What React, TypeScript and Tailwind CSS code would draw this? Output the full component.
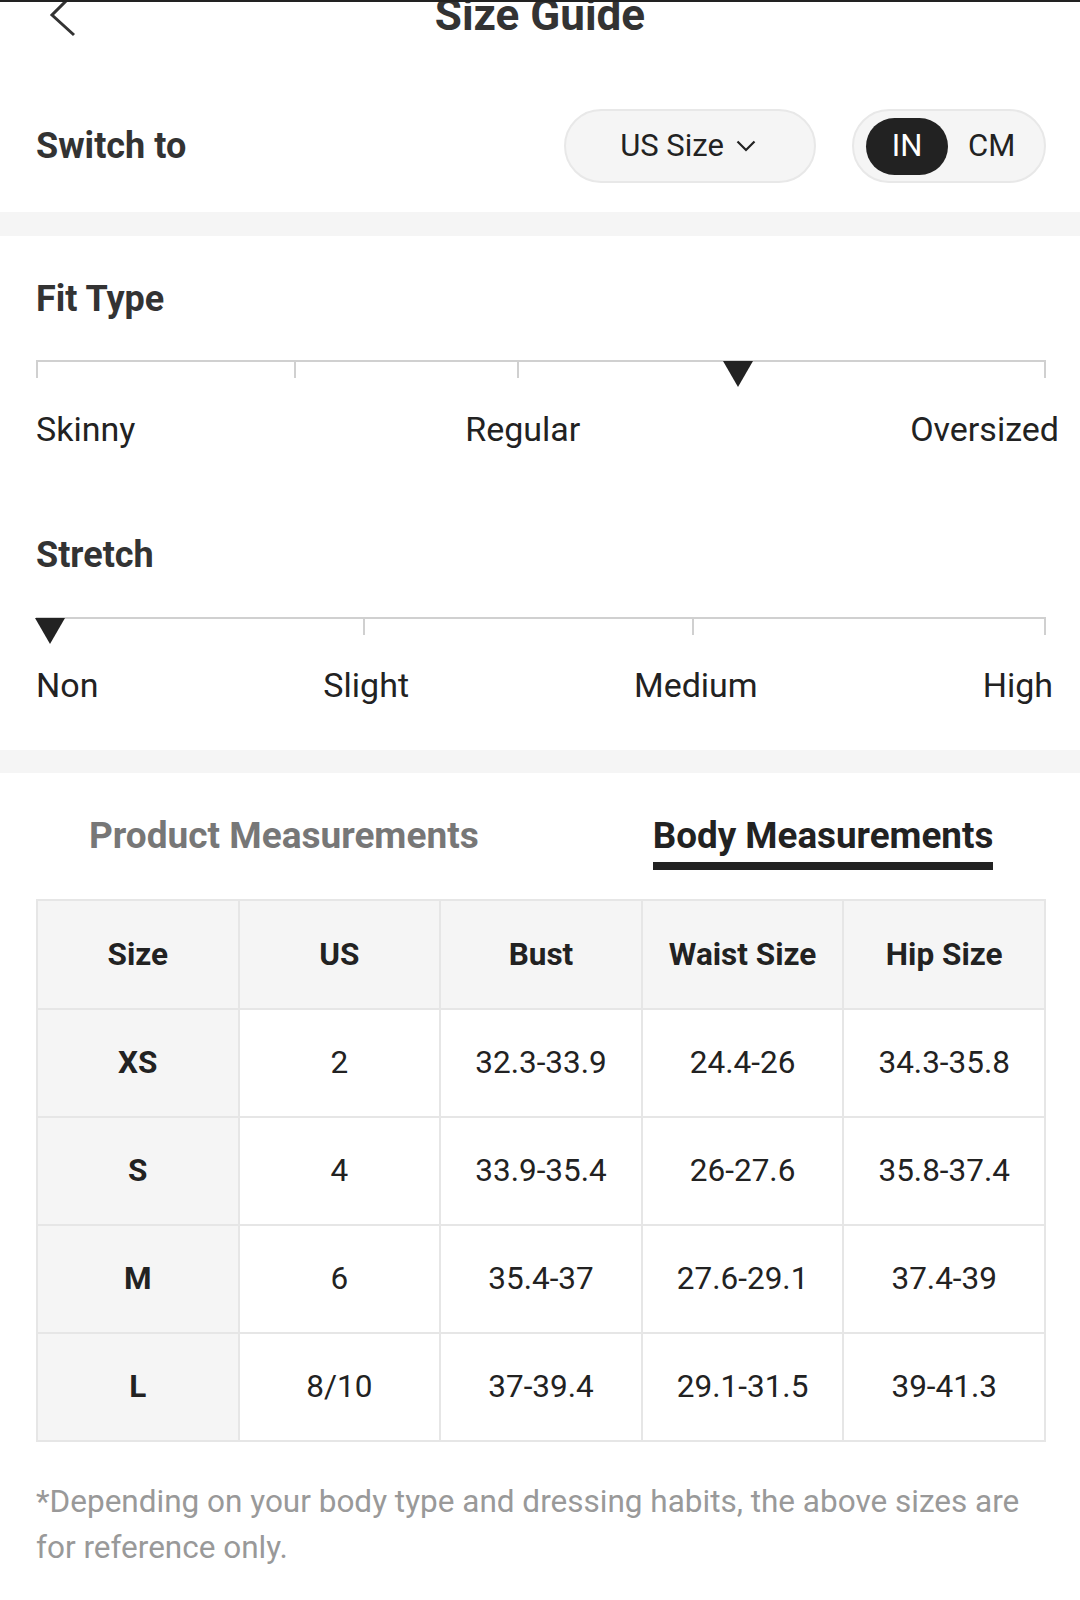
const fitTicks = [0, 258, 481, 1008];
const stretchTicks = [327, 656, 1008];

const rows = [
  ["XS", "2", "32.3-33.9", "24.4-26", "34.3-35.8"],
  ["S", "4", "33.9-35.4", "26-27.6", "35.8-37.4"],
  ["M", "6", "35.4-37", "27.6-29.1", "37.4-39"],
  ["L", "8/10", "37-39.4", "29.1-31.5", "39-41.3"],
];

function Scale({ ticks, marker }: { ticks: number[]; marker: number }) {
  return (
    <div className="relative h-[18px]">
      <div className="h-[2px] bg-[#d0d0d0]" />
      {ticks.map((t) => (
        <div
          key={t}
          className="absolute top-0 h-[18px] w-[2px] bg-[#d0d0d0]"
          style={{ left: t }}
        />
      ))}
      <svg
        className="absolute top-[1px]"
        style={{ left: marker - 15 }}
        width="30"
        height="26"
        viewBox="0 0 30 26"
      >
        <path d="M0 0H30L15 26Z" fill="#222" />
      </svg>
    </div>
  );
}

export default function App() {
  return (
    <div
      className="min-h-[1600px] w-[1080px] overflow-hidden border-t-2 border-[#222] bg-white text-[#222]"
      style={{ fontFamily: "Roboto, 'Noto Sans', sans-serif" }}
    >
      <div className="relative -mt-[9px] h-[44px] text-center">
        <svg
          className="absolute left-[44px] top-[-3px]"
          width="40"
          height="50"
          viewBox="0 0 40 50"
          fill="none"
        >
          <path d="M28 5L8 25L30 45" stroke="#333" strokeWidth="3" />
        </svg>
        <h1 className="text-[44px] font-bold leading-[44px] text-[#333]">Size Guide</h1>
      </div>

      <div className="mt-[72px] flex items-center pl-[36px] pr-[34px]">
        <span className="text-[36px] font-bold leading-[42px] text-[#333]">Switch to</span>
        <button className="ml-auto flex h-[74px] w-[252px] items-center justify-center gap-[12px] rounded-full border-2 border-[#e8e8e8] bg-[#f5f5f5] pr-[4px] text-[31px]">
          US Size
          <svg width="20" height="12" viewBox="0 0 20 12" fill="none">
            <path d="M1.5 1.5L10 10L18.5 1.5" stroke="#222" strokeWidth="2.2" />
          </svg>
        </button>
        <div className="ml-[36px] flex h-[74px] w-[194px] items-center rounded-full border-2 border-[#e8e8e8] bg-[#f5f5f5] pl-[12px] text-[31px]">
          <span className="flex h-[57px] w-[82px] items-center justify-center rounded-full bg-[#222] text-white">
            IN
          </span>
          <span className="ml-[20px]">CM</span>
        </div>
      </div>

      <div className="mt-[29px] h-[24px] bg-[#f5f5f5]" />

      <section className="pl-[36px] pr-[34px] pt-[42px]">
        <h2 className="text-[36px] font-bold leading-[42px] text-[#333]">Fit Type</h2>
        <div className="mt-[40px]">
          <Scale ticks={fitTicks} marker={702} />
        </div>
        <div className="-mr-[13px] mt-[31px] flex justify-between text-[34px] leading-[40px]">
          <span>Skinny</span>
          <span>Regular</span>
          <span>Oversized</span>
        </div>

        <h2 className="mt-[85px] text-[36px] font-bold leading-[42px] text-[#333]">Stretch</h2>
        <div className="mt-[41px]">
          <Scale ticks={stretchTicks} marker={14} />
        </div>
        <div className="-mr-[7px] mt-[30px] flex justify-between text-[34px] leading-[40px]">
          <span>Non</span>
          <span>Slight</span>
          <span>Medium</span>
          <span>High</span>
        </div>
      </section>

      <div className="mt-[45px] h-[23px] bg-[#f5f5f5]" />

      <section className="pl-[36px] pr-[34px] pt-[42px]">
        <div className="flex items-start">
          <span className="ml-[53px] text-[37px] font-bold leading-[41px] text-[#777]">
            Product Measurements
          </span>
          <div className="ml-[174px] flex flex-col">
            <span className="text-[36.8px] font-bold leading-[41px] text-[#222]">Body Measurements</span>
            <div className="mt-[6px] h-[8px] bg-[#222]" />
          </div>
        </div>

        <div className="mt-[29px] grid grid-cols-5 gap-[2px] bg-[#e6e6e6] p-[2px] text-[31.5px]">
          {["Size", "US", "Bust", "Waist Size", "Hip Size"].map((h) => (
            <div key={h} className="flex h-[107px] items-center justify-center bg-[#f5f5f5] font-bold">
              {h}
            </div>
          ))}
          {rows.map((r) =>
            r.map((c, i) => (
              <div
                key={r[0] + i}
                className={
                  i === 0
                    ? "flex h-[106px] items-center justify-center bg-[#f5f5f5] font-bold"
                    : "flex h-[106px] items-center justify-center bg-white"
                }
              >
                {c}
              </div>
            ))
          )}
        </div>

        <p className="mt-[37px] text-[31.5px] leading-[46px] text-[#999]">
          *Depending on your body type and dressing habits, the above sizes are for reference only.
        </p>
      </section>
    </div>
  );
}
